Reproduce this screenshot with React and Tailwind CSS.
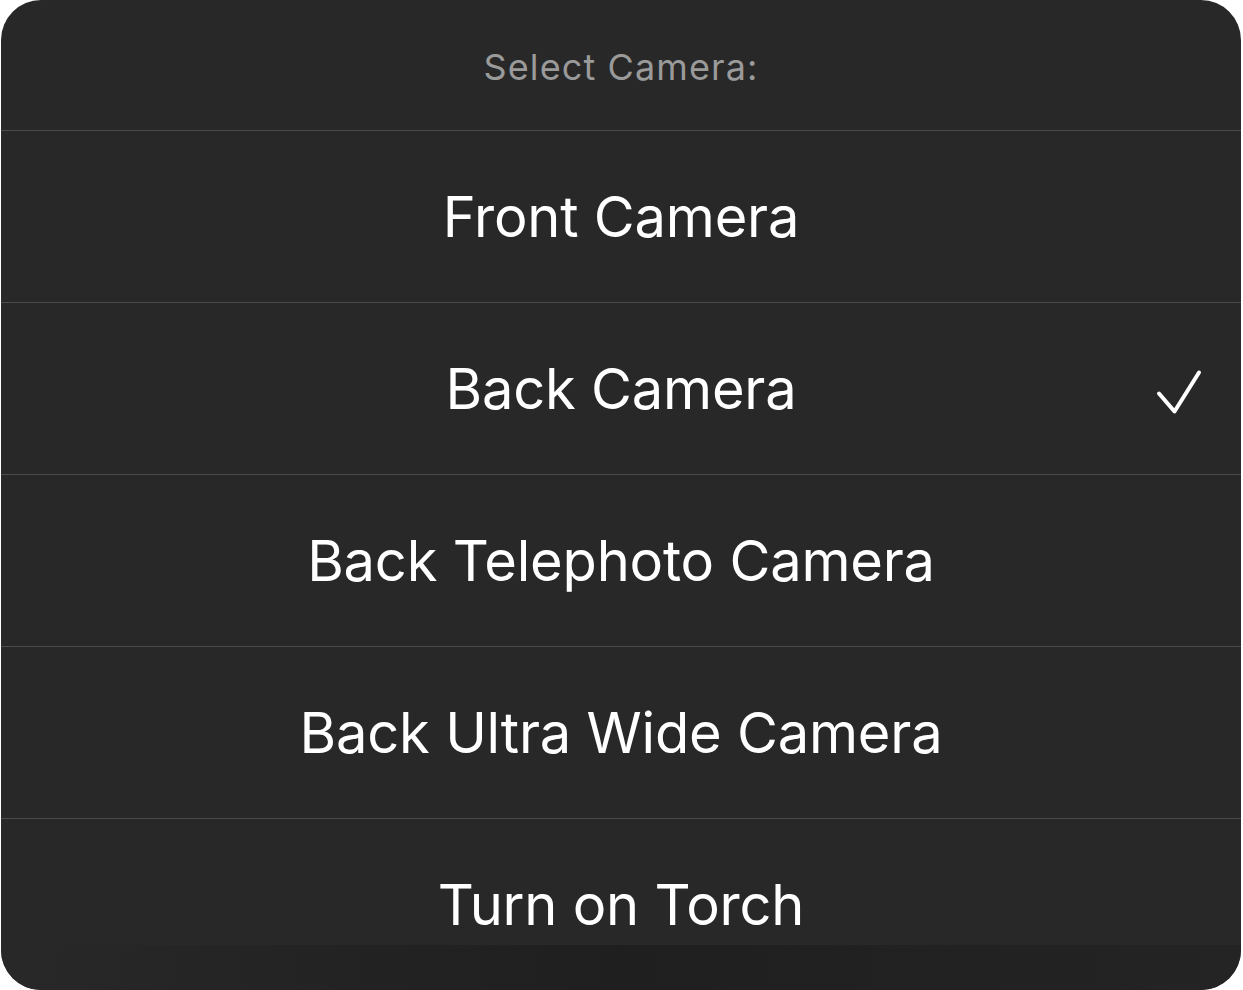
import React from "react";

const options = [
  { label: "Front Camera" },
  { label: "Back Camera", checked: true },
  { label: "Back Telephoto Camera" },
  { label: "Back Ultra Wide Camera" },
  { label: "Turn on Torch" },
];

function Check() {
  return (
    <svg width="56" height="56" viewBox="0 0 56 56" fill="none">
      <path
        d="M9 28.5 L24.5 46.5 L49 7.5"
        stroke="white"
        strokeWidth="4"
        strokeLinecap="round"
        strokeLinejoin="round"
      />
    </svg>
  );
}

export default function App() {
  return (
    <div
      className="w-[1243px] h-[990px] bg-white"
      style={{ fontFamily: "Inter, 'Noto Sans', sans-serif" }}
    >
      <div className="relative ml-px w-[1240px] h-[990px] bg-[#282828] rounded-[40px] overflow-hidden flex flex-col">
        <div className="h-[131px] flex items-center justify-center border-b border-[#4b4b4b] shrink-0">
          <span className="text-[#9a9a9a] text-[36px] tracking-[1.1px] pt-[4px]">
            Select Camera:
          </span>
        </div>
        {options.map((o, i) => (
          <div
            key={o.label}
            className={`relative h-[172px] shrink-0 flex items-center justify-center ${
              i < options.length - 1 ? "border-b border-[#4b4b4b]" : ""
            }`}
          >
            <span className="text-white text-[56px] tracking-[-0.2px]">
              {o.label}
            </span>
            {o.checked && (
              <div className="absolute left-[1149px] top-[62px]">
                <Check />
              </div>
            )}
          </div>
        ))}
        <div className="absolute left-0 right-0 bottom-0 h-[45px] bg-gradient-to-r from-[#282828] via-[#1f1f1f] to-[#242424] pointer-events-none" />
      </div>
    </div>
  );
}
